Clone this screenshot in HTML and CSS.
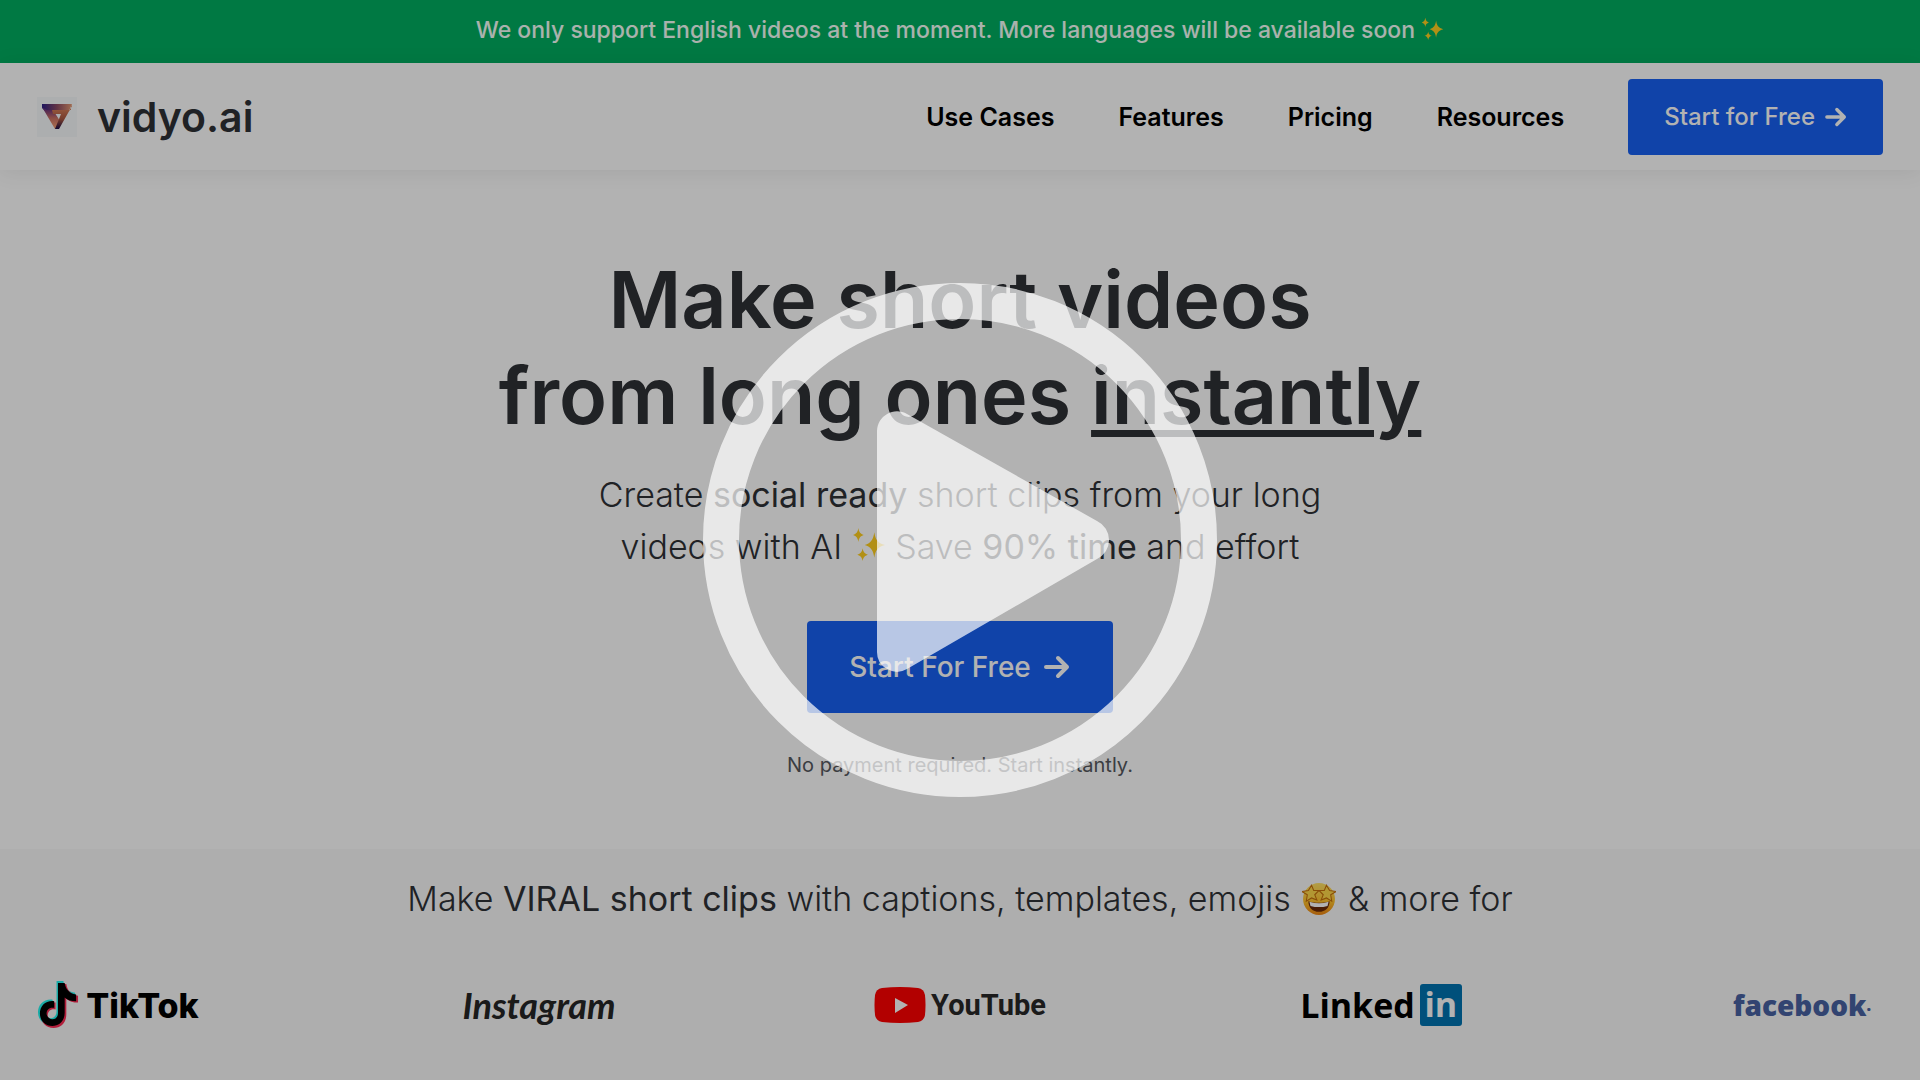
FILE: index.html
```html
<!DOCTYPE html>
<html lang="en">
<head>
    <meta charset="UTF-8">
    <meta name="viewport" content="width=device-width, initial-scale=1">
    <title>vidyo.ai</title>
    <link rel="stylesheet" href="styles.css">
</head>
<body>

<!-- shared shapes -->
<svg class="defs" aria-hidden="true">
    <symbol id="sparkles" viewBox="0 0 32 32">
        <path d="M21 5c1 7 3 10 10 12c-7 2-9 5-10 12c-1-7-3-10-9-12c6-2 8-5 9-12zM6 1c.6 4 2 5.500 5 6.500c-3 1-4.400 2.500-5 6.500c-.6-4-2-5.500-5-6.500c3-1 4.400-2.500 5-6.500zM10 20c.6 3.500 1.800 5 5 6c-3.200 1-4.400 2.500-5 6c-.6-3.500-1.800-5-5-6c3.200-1 4.400-2.500 5-6z"/>
    </symbol>
    <symbol id="arrow" viewBox="0 0 26 24">
        <path d="M2 12h21M14 3l9 9l-9 9" fill="none" stroke="currentColor" stroke-width="4" stroke-linecap="round" stroke-linejoin="round"/>
    </symbol>
    <symbol id="note" viewBox="0 0 40 46">
        <path d="M20 0h7c1 7 5 11 12 12v7c-5 0-9-1-12-4v16c0 9-6 14-13 14c-8 0-13-6-13-13c0-8 6-14 15-13v7c-5-1-8 2-8 6c0 3 3 6 6 6c4 0 6-3 6-7z"/>
    </symbol>
</svg>

<p class="banner">We only support English videos at the moment. More languages will be available soon
    <svg class="spark" role="img" aria-label="sparkles"><use href="#sparkles"/></svg></p>

<header class="header">
    <a class="brand" href="#">
        <svg class="brand-mark" viewBox="0 0 40 40" aria-hidden="true">
            <defs>
                <linearGradient id="top" x1="0" x2="1"><stop offset="0" stop-color="#2b1f86"/><stop offset=".5" stop-color="#8d4a63"/><stop offset="1" stop-color="#e59a72"/></linearGradient>
                <linearGradient id="left" x1="0" x2="0" y1="0" y2="1"><stop offset="0" stop-color="#4f2383"/><stop offset=".5" stop-color="#c96f62"/><stop offset="1" stop-color="#f5a274"/></linearGradient>
                <linearGradient id="right" x1="0" x2="0" y1="0" y2="1"><stop offset="0" stop-color="#e58b5f"/><stop offset=".6" stop-color="#a8563f"/><stop offset="1" stop-color="#1c0d45"/></linearGradient>
            </defs>
            <rect width="40" height="40" fill="#f6fafb"/>
            <path d="M5 7h30l-3 7H8l-3-3z" fill="url(#top)"/>
            <path d="M5 10l5 3h6l7 11l-3 8h-2z" fill="url(#left)"/>
            <path d="M15 13h19v-5l1 1l-13 23h-4l6-15h-8z" fill="url(#right)"/>
        </svg>
        vidyo.ai
    </a>
    <nav class="nav">
        <a href="#">Use Cases</a>
        <a href="#">Features</a>
        <a href="#">Pricing</a>
        <a href="#">Resources</a>
        <a class="btn" href="#">Start for Free <svg class="arrow" aria-hidden="true"><use href="#arrow"/></svg></a>
    </nav>
</header>

<main>
    <section class="hero">
        <h1>Make short videos<br>from long ones <u>instantly</u></h1>
        <p class="lead">Create <b>social ready</b> short clips from your long<br>
            videos with AI <svg class="spark" role="img" aria-label="sparkles"><use href="#sparkles"/></svg> Save <b>90% time</b> and effort</p>
        <a class="btn btn-big" href="#">Start For Free <svg class="arrow" aria-hidden="true"><use href="#arrow"/></svg></a>
        <p class="note">No payment required. Start instantly.</p>
    </section>

    <section class="platforms">
        <h2>Make <b>VIRAL short clips</b> with captions, templates, emojis
            <svg class="emoji" viewBox="0 0 32 32" role="img" aria-label="star-struck">
                <defs><linearGradient id="face" x1="0" x2="0" y1="0" y2="1"><stop offset="0" stop-color="#ffe266"/><stop offset=".6" stop-color="#ffc02a"/><stop offset="1" stop-color="#ee8512"/></linearGradient></defs>
                <circle cx="16" cy="16" r="15" fill="url(#face)"/>
                <path d="M6 18c6 2 14 2 20 0c0 6-4 10-10 10s-10-4-10-10z" fill="#6b2a08"/>
                <path d="M7 18.500c6 2 12 2 18 0l-1 4c-5 1.500-11 1.500-16 0z" fill="#fff"/>
                <path d="M9 3l2 5l5 0l-4 4l2 5l-5-2l-5 3l1-6l-5-3l6-1zM23 3l-2 5l-5 0l4 4l-2 5l5-2l5 3l-1-6l5-3l-6-1z" fill="#ffd84a" stroke="#c5700d"/>
            </svg>
            &amp; more for</h2>
        <ul class="logos">
            <li class="logo tiktok">
                <svg viewBox="0 0 44 50" aria-hidden="true">
                    <use href="#note" x="0" y="0" width="40" height="46" fill="#25f4ee"/>
                    <use href="#note" x="3" y="3" width="40" height="46" fill="#fe2c55"/>
                    <use href="#note" x="2" y="2" width="39" height="45" fill="#000"/>
                </svg>
                TikTok
            </li>
            <li class="logo instagram">Instagram</li>
            <li class="logo youtube">
                <svg viewBox="0 0 52 36" aria-hidden="true">
                    <path d="M8 1Q26-1 44 1Q50 2 51 8Q52 18 51 28Q50 34 44 35Q26 37 8 35Q2 34 1 28Q0 18 1 8Q2 2 8 1z" fill="#f00"/>
                    <path d="M21 11l13 7l-13 8z" fill="#fff"/>
                </svg>
                YouTube
            </li>
            <li class="logo linkedin">Linked<span>in</span></li>
            <li class="logo facebook">facebook<small>.</small></li>
        </ul>
    </section>
</main>

<div class="overlay">
    <button class="play" type="button" aria-label="Play video">
        <svg viewBox="0 0 514 514" aria-hidden="true">
            <circle cx="257" cy="257" r="239" fill="none" stroke="#fff" stroke-width="36"/>
            <path d="M174 148A20 20 0 0 1 204 131L394 238A21 21 0 0 1 394 276L204 386A20 20 0 0 1 174 368z" fill="#fff"/>
        </svg>
    </button>
</div>

</body>
</html>
```
FILE: styles.css
```css
* {
    box-sizing: border-box;
}
body {
    margin: 0;
    min-height: 100vh;
    position: relative;
    display: flex;
    flex-direction: column;
    font-family: Inter, "Liberation Sans", sans-serif;
    color: #2f3136;
    background: #fff;
}
main {
    flex: 1;
    display: flex;
    flex-direction: column;
}
h1, h2, p, ul {
    margin: 0;
    padding: 0;
}
a {
    color: inherit;
    text-decoration: none;
}
.defs {
    position: absolute;
    width: 0;
    height: 0;
}

.banner {
    padding: 15px 15px 17px;
    background: #00ae60;
    color: #f4fff8;
    font-size: 23px;
    font-weight: 500;
    line-height: 31px;
    text-align: center;
}
.spark {
    width: 1em;
    height: 1em;
    vertical-align: -2px;
    fill: #ffcf1f;
}

.header {
    display: flex;
    align-items: center;
    justify-content: space-between;
    height: 107px;
    padding: 0 37px;
    box-shadow: 0 2px 20px rgba(0, 0, 0, .08);
}
.brand {
    display: flex;
    align-items: center;
    gap: 20px;
    font-size: 41px;
    font-weight: 600;
}
.brand-mark {
    width: 40px;
    height: 40px;
}
.nav {
    display: flex;
    align-items: center;
    gap: 64px;
    color: #000;
    font-size: 25px;
    font-weight: 600;
}
.btn {
    display: inline-flex;
    align-items: center;
    gap: 10px;
    padding: 0 36px;
    height: 76px;
    border-radius: 4px;
    background: #1860f2;
    color: #fff;
    font-size: 24px;
    font-weight: 500;
}
.arrow {
    width: 22px;
    height: 20px;
}

.hero {
    display: flex;
    flex-direction: column;
    align-items: center;
    height: 679px;
    padding-top: 81px;
    text-align: center;
}
h1 {
    font-size: 79px;
    font-weight: 600;
    line-height: 96px;
}
h1 u {
    text-decoration-thickness: 7px;
    text-underline-offset: 6px;
}
.lead {
    margin-top: 26px;
    font-size: 34px;
    font-weight: 300;
    line-height: 52px;
}
.lead b, h2 b {
    font-weight: 400;
}
.btn-big {
    gap: 12px;
    margin-top: 48px;
    padding: 0 42px;
    height: 92px;
    font-size: 28px;
}
.btn-big .arrow {
    width: 28px;
    height: 24px;
}
.note {
    margin-top: 38px;
    color: #55585e;
    font-size: 20px;
    font-weight: 400;
    line-height: 28px;
}

.platforms {
    flex: 1;
    padding: 24px 37px;
    background: #fafafa;
}
h2 {
    font-size: 34px;
    font-weight: 300;
    line-height: 52px;
    text-align: center;
}
.emoji {
    width: 34px;
    height: 34px;
    margin: 0 2px;
    vertical-align: -5px;
}
.logos {
    display: flex;
    justify-content: space-between;
    margin-top: 54px;
    list-style: none;
}
.logo {
    display: flex;
    align-items: center;
    justify-content: center;
    width: 162px;
    height: 52px;
    color: #000;
    font-weight: 700;
    white-space: nowrap;
}
.tiktok {
    gap: 6px;
    font-size: 34px;
    font-weight: 800;
}
.tiktok svg {
    width: 43px;
    height: 49px;
    flex: none;
}
.instagram {
    color: #262626;
    font-family: Lato, sans-serif;
    font-style: italic;
    font-size: 36px;
}
.youtube {
    gap: 5px;
    color: #282828;
    font-family: Roboto, sans-serif;
    font-size: 29px;
}
.youtube svg {
    width: 52px;
    height: 36px;
    flex: none;
}
.linkedin {
    gap: 5px;
    font-family: "Open Sans", sans-serif;
    font-size: 34px;
}
.linkedin span {
    width: 42px;
    height: 42px;
    border-radius: 3px;
    background: #0073b1;
    color: #fff;
    line-height: 40px;
    text-align: center;
}
.facebook {
    color: #4862a3;
    font-family: "Open Sans", sans-serif;
    font-weight: 800;
    font-size: 28px;
}
.facebook small {
    font-size: 16px;
}

/* dimmed preview with the play button in the middle */
.overlay {
    position: absolute;
    inset: 0;
    display: flex;
    align-items: center;
    justify-content: center;
    background: rgba(0, 0, 0, .3);
}
.play {
    width: 514px;
    height: 514px;
    padding: 0;
    border: 0;
    border-radius: 50%;
    background: none;
    opacity: .7;
    cursor: pointer;
}
.play svg {
    display: block;
}
```
